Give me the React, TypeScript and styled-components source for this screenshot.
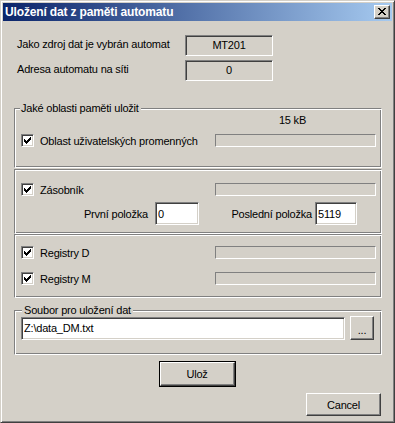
import React from 'react'
import styled, { createGlobalStyle, css } from 'styled-components'

const FACE = '#d4d0c8'
const SHADOW = '#808080'
const DARK = '#404040'
const LIGHT = '#ffffff'

const GlobalStyle = createGlobalStyle`
  html, body {
    margin: 0;
    padding: 0;
    background: ${FACE};
  }
  body {
    font-family: 'Liberation Sans', Arial, sans-serif;
    font-size: 11px;
    letter-spacing: -0.2px;
    color: #000;
  }
  * {
    box-sizing: border-box;
  }
`

const sunken = css`
  border: 1px solid;
  border-color: ${SHADOW} ${LIGHT} ${LIGHT} ${SHADOW};
  box-shadow: inset 1px 1px 0 ${DARK}, inset -1px -1px 0 ${FACE};
`

const raised = css`
  border: 1px solid;
  border-color: ${LIGHT} ${DARK} ${DARK} ${LIGHT};
  box-shadow: inset -1px -1px 0 ${SHADOW};
  background: ${FACE};
`

const etched = css`
  border: 1px solid;
  border-color: ${SHADOW} ${LIGHT} ${LIGHT} ${SHADOW};
  box-shadow: inset 1px 1px 0 ${LIGHT}, inset -1px -1px 0 ${SHADOW};
`

const Window = styled.div`
  width: 395px;
  height: 423px;
  background: ${FACE};
  border: 1px solid;
  border-color: ${FACE} ${DARK} ${DARK} ${FACE};
  box-shadow: inset 1px 1px 0 ${LIGHT}, inset -1px -1px 0 ${SHADOW};
  padding: 2px;
  display: flex;
  flex-direction: column;
`

const TitleBar = styled.div`
  height: 18px;
  flex: none;
  display: flex;
  align-items: center;
  justify-content: space-between;
  padding: 0 2px;
  background: linear-gradient(to right, #0a246a, #a6caf0);
`

const Title = styled.span`
  color: #fff;
  font-weight: bold;
  font-size: 12px;
  letter-spacing: -0.15px;
`

const CloseButton = styled.span`
  ${raised};
  width: 16px;
  height: 14px;
  display: block;

  svg {
    display: block;
    margin: 2px 0 0 3px;
  }
`

const Body = styled.div`
  flex: 1;
  display: flex;
  flex-direction: column;
  padding: 14px 10px 0 11px;
`

const InfoRow = styled.div<{ $gap?: number }>`
  display: flex;
  align-items: center;
  height: 21px;
  margin-top: ${(p) => p.$gap ?? 0}px;
`

const InfoLabel = styled.span`
  width: 171px;
  padding-left: 3px;
  margin-top: -3px;
`

const ValueBox = styled.div`
  ${sunken};
  width: 88px;
  height: 21px;
  line-height: 19px;
  text-align: center;
  background: ${FACE};
`

const Group = styled.div<{ $top: number; $height: number }>`
  ${etched};
  position: relative;
  margin-top: ${(p) => p.$top}px;
  height: ${(p) => p.$height}px;
`

const Legend = styled.span<{ $left: number; $pad: number }>`
  position: absolute;
  top: -7px;
  left: ${(p) => p.$left}px;
  padding: 0 2px 0 ${(p) => p.$pad}px;
  line-height: 13px;
  background: ${FACE};
`

const Section = styled.div<{ $top: number; $height: number; $pad: number; $rowGap: number }>`
  ${etched};
  position: relative;
  margin-top: ${(p) => p.$top}px;
  height: ${(p) => p.$height}px;
  padding: ${(p) => p.$pad}px 5px 0 6px;
  display: grid;
  grid-template-columns: 194px 161px;
  align-content: start;
  align-items: center;
  row-gap: ${(p) => p.$rowGap}px;
`

const SizeText = styled.div`
  grid-column: 2;
  text-align: center;
  padding-right: 6px;
  line-height: 13px;
`

const Bar = styled.div`
  height: 13px;
  border: 1px solid;
  border-color: ${SHADOW} ${LIGHT} ${LIGHT} ${SHADOW};
  background: ${FACE};
`

const CheckItem = styled.label`
  display: flex;
  align-items: center;
  gap: 6px;
  height: 13px;
  white-space: nowrap;
`

const CheckBox = styled.span`
  ${sunken};
  width: 13px;
  height: 13px;
  flex: none;
  background: #fff;

  svg {
    display: block;
  }
`

const RangeRow = styled.div`
  grid-column: 1 / span 2;
  display: flex;
  align-items: center;
  margin-top: 6px;
  margin-left: -7px;
`

const RangeLabel = styled.span<{ $width: number; $gap: number }>`
  width: ${(p) => p.$width}px;
  text-align: right;
  padding-right: ${(p) => p.$gap}px;
  white-space: nowrap;
`

const Field = styled.input<{ $width: number; $height?: number }>`
  ${sunken};
  width: ${(p) => p.$width}px;
  height: ${(p) => p.$height ?? 23}px;
  margin: 0;
  padding: 0 2px;
  font: inherit;
  letter-spacing: inherit;
  color: #000;
  background: #fff;
  outline: none;
`

const FileRow = styled.div`
  display: flex;
  align-items: center;
  gap: 5px;
  padding: 5px 0 0 6px;
`

const Button = styled.button<{ $default?: boolean; $width: number; $height: number }>`
  ${raised};
  width: ${(p) => p.$width}px;
  height: ${(p) => p.$height}px;
  margin: 0;
  padding: 0;
  font: inherit;
  letter-spacing: inherit;
  color: #000;
  ${(p) =>
    p.$default &&
    css`
      outline: 1px solid #000;
      outline-offset: 0;
    `}
`

const DefaultButton = styled(Button)`
  align-self: center;
  margin-top: 7px;
  margin-left: -2px;
`

const CancelButton = styled(Button)`
  align-self: flex-end;
  margin-top: 7px;
  margin-right: 1px;
`

const BrowseButton = styled(Button)`
  padding-top: 4px;
`

const CHECK_TOPS = [2, 3, 4, 3, 2, 1, 0]

function Check() {
  return (
    <CheckBox>
      <svg width="11" height="11" viewBox="0 0 11 11" shapeRendering="crispEdges">
        {CHECK_TOPS.map((t, i) => (
          <rect key={i} x={2 + i} y={2 + t} width="1" height="3" fill="#000" />
        ))}
      </svg>
    </CheckBox>
  )
}

const X_ROWS = [
  [0, 1, 6, 7],
  [1, 2, 5, 6],
  [2, 3, 4, 5],
  [3, 4],
  [2, 3, 4, 5],
  [1, 2, 5, 6],
  [0, 1, 6, 7],
]

function CloseGlyph() {
  return (
    <svg width="8" height="7" viewBox="0 0 8 7" shapeRendering="crispEdges">
      {X_ROWS.map((cols, r) =>
        cols.map((c) => <rect key={`${r}-${c}`} x={c} y={r} width="1" height="1" fill="#000" />)
      )}
    </svg>
  )
}

function CheckRow({ label }: { label: string }) {
  return (
    <CheckItem>
      <Check />
      <span>{label}</span>
    </CheckItem>
  )
}

export default function App() {
  return (
    <>
      <GlobalStyle />
      <Window>
        <TitleBar>
          <Title>Uložení dat z paměti automatu</Title>
          <CloseButton>
            <CloseGlyph />
          </CloseButton>
        </TitleBar>
        <Body>
          <InfoRow>
            <InfoLabel>Jako zdroj dat je vybrán automat</InfoLabel>
            <ValueBox>MT201</ValueBox>
          </InfoRow>
          <InfoRow $gap={4}>
            <InfoLabel>Adresa automatu na síti</InfoLabel>
            <ValueBox>0</ValueBox>
          </InfoRow>

          <Section $top={27} $height={60} $pad={5} $rowGap={7}>
            <Legend $left={5} $pad={1}>Jaké oblasti paměti uložit</Legend>
            <SizeText>15 kB</SizeText>
            <CheckRow label="Oblast uživatelských promenných" />
            <Bar />
          </Section>

          <Section $top={1} $height={65} $pad={13} $rowGap={0}>
            <CheckRow label="Zásobník" />
            <Bar />
            <RangeRow>
              <RangeLabel $width={141} $gap={7}>První položka</RangeLabel>
              <Field $width={44} readOnly value="0" />
              <RangeLabel $width={116} $gap={3}>Poslední položka</RangeLabel>
              <Field $width={42} readOnly value="5119" />
            </RangeRow>
          </Section>

          <Section $top={0} $height={64} $pad={11} $rowGap={13}>
            <CheckRow label="Registry D" />
            <Bar />
            <CheckRow label="Registry M" />
            <Bar />
          </Section>

          <Group $top={12} $height={45}>
            <Legend $left={7} $pad={2}>Soubor pro uložení dat</Legend>
            <FileRow>
              <Field $width={324} readOnly value={'Z:\\data_DM.txt'} />
              <BrowseButton $width={24} $height={24}>...</BrowseButton>
            </FileRow>
          </Group>

          <DefaultButton $default $width={75} $height={24}>
            Ulož
          </DefaultButton>
          <CancelButton $width={75} $height={23}>
            Cancel
          </CancelButton>
        </Body>
      </Window>
    </>
  )
}
